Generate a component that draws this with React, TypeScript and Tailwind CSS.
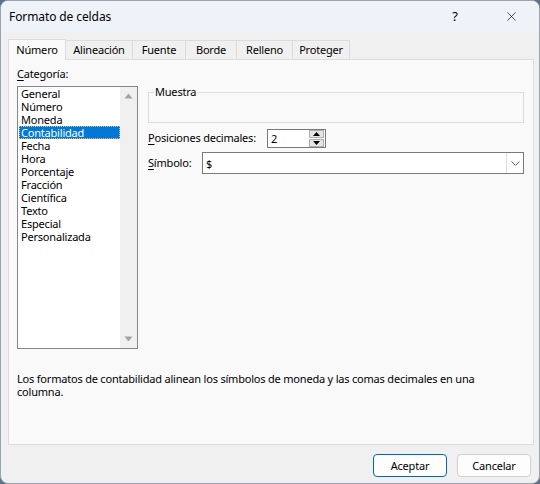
import { X } from 'lucide-react'

const categories = [
  'General',
  'Número',
  'Moneda',
  'Contabilidad',
  'Fecha',
  'Hora',
  'Porcentaje',
  'Fracción',
  'Científica',
  'Texto',
  'Especial',
  'Personalizada',
]

const tabs = ['Número', 'Alineación', 'Fuente', 'Borde', 'Relleno', 'Proteger']
const tabWidths = ['w-[58px]', 'w-[67px]', 'w-[53px]', 'w-[51px]', 'w-[56px]', 'w-[57px]']

function Triangle({ up }: { up?: boolean }) {
  return (
    <svg width="9" height="6" viewBox="0 0 9 6">
      <path d={up ? 'M0.5 5.5 L4.5 0.5 L8.5 5.5 Z' : 'M0.5 0.5 L4.5 5.5 L8.5 0.5 Z'} fill="#a3a3a3" />
    </svg>
  )
}

function SmallArrow({ up }: { up?: boolean }) {
  return (
    <svg width="7" height="4" viewBox="0 0 7 4">
      <path d={up ? 'M0 4 L3.5 0 L7 4 Z' : 'M0 0 L3.5 4 L7 0 Z'} fill="#000" />
    </svg>
  )
}

export default function App() {
  return (
    <div
      className="w-[540px] h-[484px] bg-[#5d7089] text-[11px] tracking-[-0.2px] text-black"
      style={{ fontFamily: '"Noto Sans", "Segoe UI", sans-serif' }}
    >
      <div className="w-full h-full rounded-[8px] border border-[#9aa3ad] bg-[#f0f0f0] overflow-hidden flex flex-col">
        {/* title bar */}
        <div className="h-[31px] shrink-0 bg-[#eef3f9] flex items-center pl-[8px] text-[12px] tracking-[-0.1px]">
          <span className="flex-1 leading-none">Formato de celdas</span>
          <span className="w-[14px] text-center mr-[42px] text-[13px]">?</span>
          <X size={15} strokeWidth={1.1} className="mr-[20px]" />
        </div>

        <div className="flex-1 flex flex-col px-[7px] pt-[7px]">
          {/* tabs */}
          <div className="flex items-end h-[20px] relative z-10">
            {tabs.map((t, i) =>
              i === 0 ? (
                <div
                  key={t}
                  className={`${tabWidths[i]} h-[21px] -mb-[1px] bg-[#f9f9f9] border border-b-0 border-[#dcdcdc] flex items-center justify-center`}
                >
                  {t}
                </div>
              ) : (
                <div
                  key={t}
                  className={`${tabWidths[i]} h-[19px] bg-[#f0f0f0] border border-b-0 border-l-0 border-[#dcdcdc] flex items-center justify-center`}
                >
                  {t}
                </div>
              )
            )}
          </div>

          {/* panel */}
          <div className="h-[386px] w-[526px] bg-[#f9f9f9] border border-[#dcdcdc] flex flex-col px-[8px] pt-[7px]">
            <div className="flex gap-[10px]">
              {/* category column */}
              <div className="w-[121px] flex flex-col">
                <div className="h-[19px] leading-[14px]">
                  <span className="underline underline-offset-2">C</span>ategoría:
                </div>
                <div className="h-[263px] border border-[#828790] bg-white flex">
                  <div className="flex-1 pl-[1px]">
                    {categories.map((c) =>
                      c === 'Contabilidad' ? (
                        <div
                          key={c}
                          className="h-[13px] leading-[13px] bg-[#0078d7] text-white pl-[2px] outline-1 outline-dotted outline-[#f0c060] -outline-offset-1"
                        >
                          {c}
                        </div>
                      ) : (
                        <div key={c} className="h-[13px] leading-[13px] pl-[2px]">
                          {c}
                        </div>
                      )
                    )}
                  </div>
                  <div className="w-[17px] bg-[#f0f0f0] flex flex-col items-center justify-between py-[6px]">
                    <Triangle up />
                    <Triangle />
                  </div>
                </div>
              </div>

              {/* right column */}
              <div className="flex-1 flex flex-col pr-[1px]">
                <div className="relative mt-[25px] h-[31px] border border-[#dcdcdc]">
                  <span className="absolute -top-[9px] left-[5px] bg-[#f9f9f9] px-[1px] leading-[16px]">Muestra</span>
                </div>
                <div className="flex items-center mt-[6px] h-[19px]">
                  <span className="w-[119px]">
                    <span className="underline underline-offset-2">P</span>osiciones decimales:
                  </span>
                  <div className="w-[59px] h-[19px] border border-[#7a7a7a] bg-white flex items-center">
                    <span className="flex-1 pl-[3px] leading-none">2</span>
                    <div className="w-[16px] h-[17px] flex flex-col gap-[1px] pr-[1px]">
                      <div className="flex-1 border border-[#adadad] bg-[#e5e5e5] flex items-center justify-center">
                        <SmallArrow up />
                      </div>
                      <div className="flex-1 border border-[#adadad] bg-[#e5e5e5] flex items-center justify-center">
                        <SmallArrow />
                      </div>
                    </div>
                  </div>
                </div>
                <div className="flex items-center mt-[4px] h-[22px]">
                  <span className="w-[54px]">
                    <span className="underline underline-offset-2">S</span>ímbolo:
                  </span>
                  <div className="flex-1 h-[22px] border border-[#7a7a7a] bg-white flex items-center">
                    <span className="flex-1 pl-[3px] leading-none">$</span>
                    <div className="w-[17px] h-full border-l border-[#dcdcdc] flex items-center justify-center">
                      <svg width="9" height="5" viewBox="0 0 9 5">
                        <path d="M0.5 0.5 L4.5 4.5 L8.5 0.5" fill="none" stroke="#606060" strokeWidth="1" />
                      </svg>
                    </div>
                  </div>
                </div>
              </div>
            </div>

            <p className="mt-[23px] leading-[13px] max-w-[490px]">
              Los formatos de contabilidad alinean los símbolos de moneda y las comas decimales en una columna.
            </p>
          </div>

          {/* buttons */}
          <div className="flex justify-end gap-[10px] mt-[9px] pr-[1px]">
            <button className="w-[74px] h-[23px] rounded-[4px] border border-[#0067c0] bg-[#fdfdfd] leading-none">
              Aceptar
            </button>
            <button className="w-[74px] h-[23px] rounded-[4px] border border-[#d0d0d0] bg-[#fdfdfd] leading-none">
              Cancelar
            </button>
          </div>
        </div>
      </div>
    </div>
  )
}
